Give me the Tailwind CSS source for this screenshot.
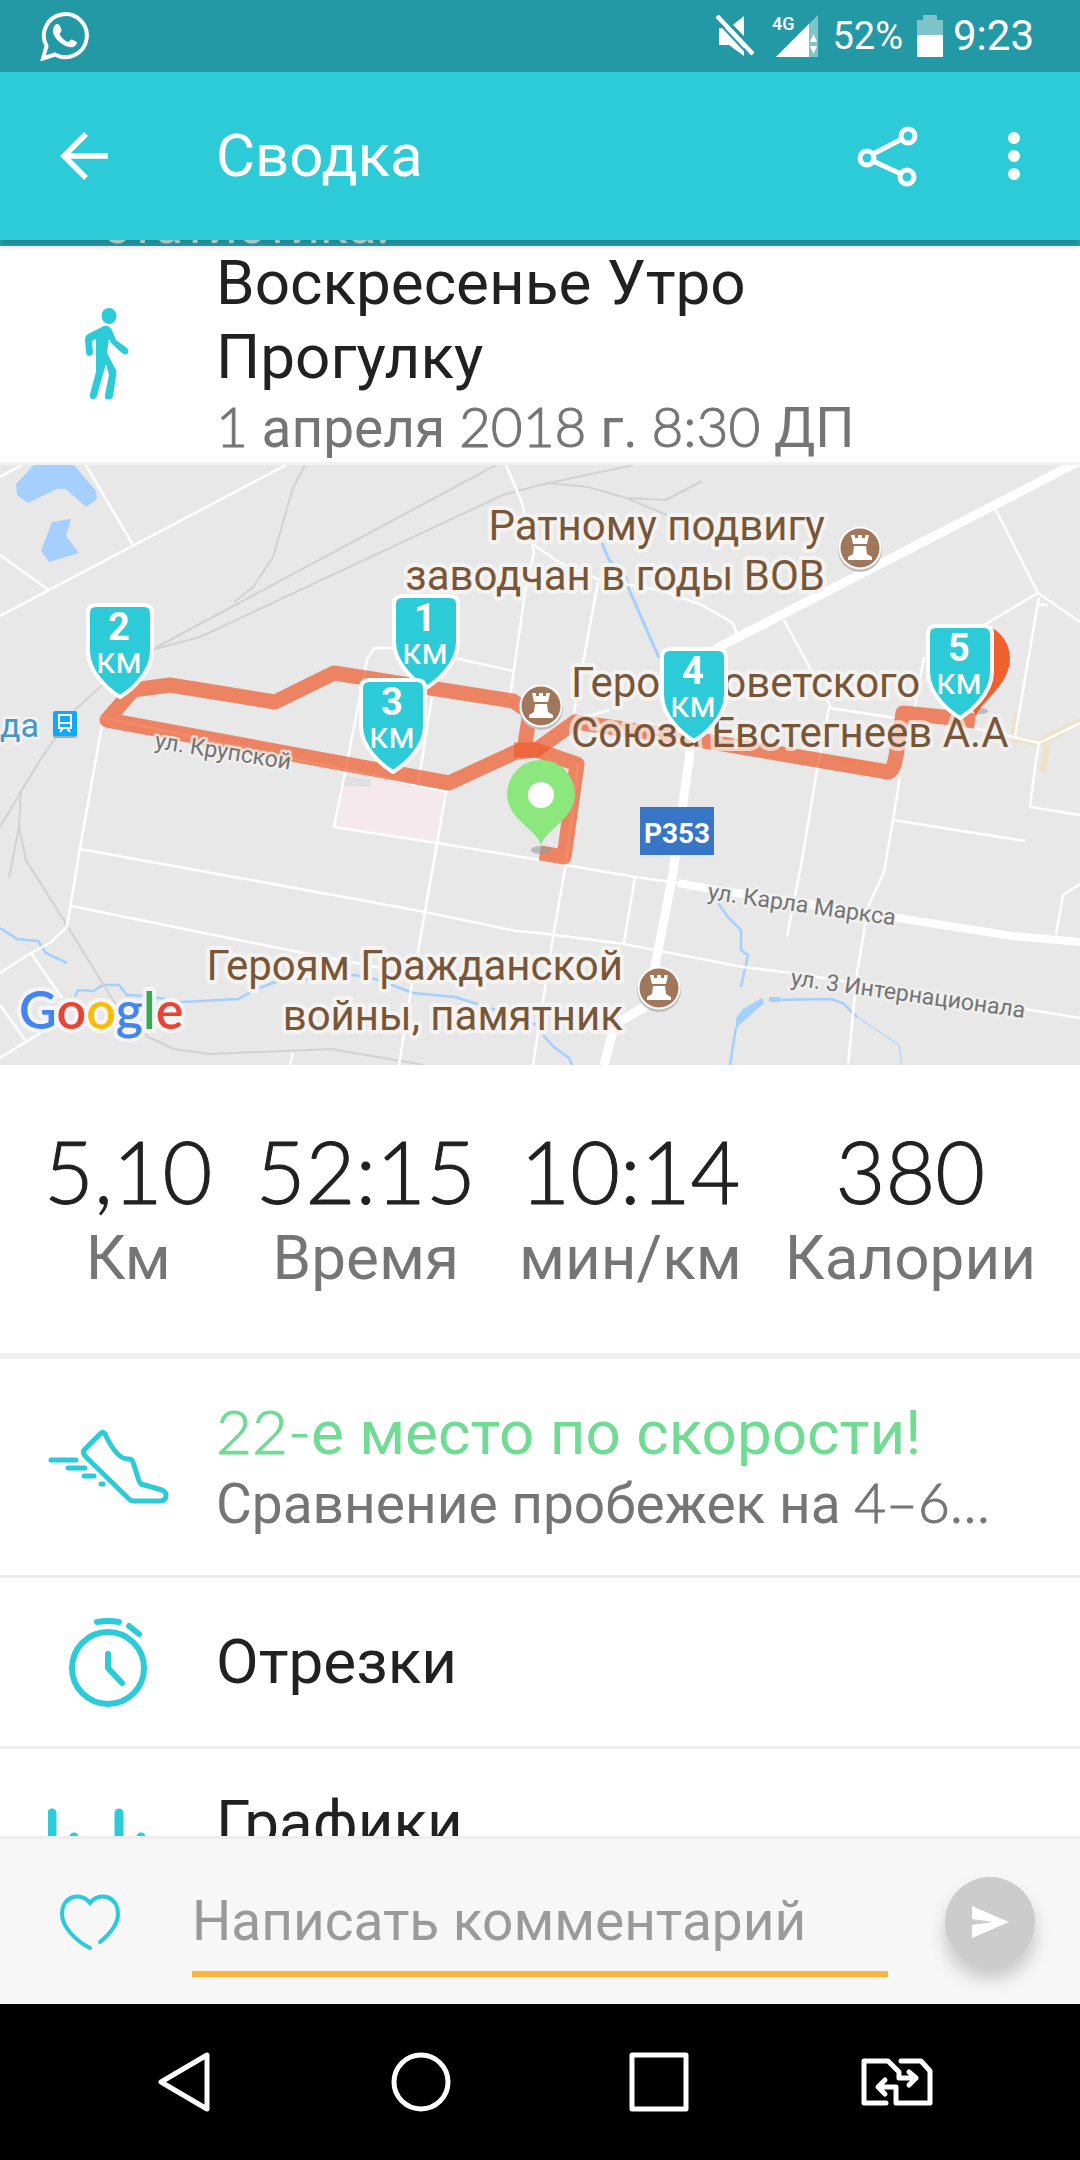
<!DOCTYPE html>
<html lang="ru">
<head>
    <meta charset="UTF-8">
    <meta name="viewport" content="width=device-width, initial-scale=1.0">
    <title>Сводка</title>
    <script src="https://cdn.jsdelivr.net/npm/@tailwindcss/browser@4"></script>
</head>
<body class="h-screen flex flex-col overflow-hidden bg-white font-[Roboto,sans-serif] text-[#212121]">

    <!-- Status bar -->
    <div class="h-[72px] shrink-0 bg-[#2499a6] text-white flex items-center justify-between pl-10 pr-[46px]">
        <svg class="size-[50px]" viewBox="0 0 50 50" fill="none" aria-label="WhatsApp">
            <path d="M3 47.500 L6.500 35 A21.500 21.500 0 1 1 15 43.500 Z" stroke="#fff" stroke-width="4"/>
            <path d="M15 14c2-2 4-1 5 1l1.500 4c.5 1.500-2 3-2 4 2 4 5 6.500 8.500 8 1.500 0 2-3 4-2.500l4 2c1.500 1 1 3-1 4.500-3 2-7 1.500-12-1.500-5-3-9-8-10-12-.5-3 .5-6 2-7.500z" fill="#fff"/>
        </svg>
        <div class="flex items-center">
            <svg class="w-[40px] h-[42px] mr-[16px]" viewBox="0 0 40 42" fill="#fff" aria-label="Без звука">
                <path d="M3 13H13L28 1V41L13 30H3z"/>
                <path d="M3 -1L41 38" stroke="#2499a6" stroke-width="5"/>
                <path d="M1 1L37 39" stroke="#fff" stroke-width="4.500"/>
                <path d="M0 5L30 37" stroke="#2499a6" stroke-width="2"/>
            </svg>
            <svg class="w-[46px] h-[44px] mr-[14px]" viewBox="0 0 46 44" aria-label="Сигнал 4G">
                <path d="M4 43L46 1V43z" fill="#7fc4cb"/>
                <path d="M4 43L37 10V43z" fill="#fff"/>
                <path d="M38 28l3.500-8 3.500 8zM38 32h7l-3.500 8z" fill="#fff"/>
                <text x="0" y="16" font-size="18" font-weight="500" fill="#fff">4G</text>
            </svg>
            <span class="text-[38px] leading-[44px] mr-[14px]">52%</span>
            <svg class="w-[26px] h-[42px] mr-[10px]" viewBox="0 0 26 42" aria-label="Батарея">
                <path d="M6 0h14v5h6v16H0V5h6z" fill="#7fc4cb"/>
                <path d="M0 20h26v22H0z" fill="#fff"/>
            </svg>
            <span class="text-[42px] leading-[48px]">9:23</span>
        </div>
    </div>

    <!-- App bar -->
    <header class="h-[168px] shrink-0 relative z-10 bg-[#2dcad7] text-white flex items-center shadow-[0_6px_6px_rgba(0,0,0,0.2)]">
        <button type="button" aria-label="Назад" class="w-[216px] h-full pl-[60px]">
            <svg class="size-[48px]" viewBox="0 0 48 48" fill="none" stroke="#fff" stroke-width="5.500">
                <path d="M48 24H5M26 2L4 24l22 22"/>
            </svg>
        </button>
        <h1 class="flex-1 text-[60px] leading-[74px]">Сводка</h1>
        <button type="button" aria-label="Поделиться" class="w-[84px] h-full flex items-center justify-center">
            <svg class="size-[64px]" viewBox="0 0 64 64" fill="none" stroke="#fff" stroke-width="5">
                <circle cx="11" cy="34" r="7"/><circle cx="52" cy="12" r="7"/><circle cx="51" cy="53" r="7"/>
                <path d="M17 30l29-15M17 37l28 13"/>
            </svg>
        </button>
        <button type="button" aria-label="Ещё" class="w-[84px] h-full ml-[42px] mr-6 flex items-center justify-center">
            <svg class="w-[12px] h-[48px]" viewBox="0 0 12 48" fill="#fff">
                <circle cx="6" cy="6" r="6"/><circle cx="6" cy="24" r="6"/><circle cx="6" cy="42" r="6"/>
            </svg>
        </button>
    </header>

    <main class="flex-1 min-h-0 overflow-hidden">
        <!-- Banner, scrolled almost out of view -->
        <div class="h-[6px] overflow-hidden bg-[#2aa9b5] text-white/80 flex items-end pl-[103px]">
            <p class="text-[52px] leading-[40px]">статистика.</p>
        </div>

        <!-- Activity title -->
        <section class="flex items-center">
            <div class="w-[216px] shrink-0 flex justify-center">
                <svg class="w-[48px] h-[92px]" viewBox="0 0 48 92" fill="#2dcad7">
                    <ellipse cx="25" cy="8" rx="7.500" ry="8"/>
                    <path d="M18 19Q22 16 27 20L32 32 43 40Q46 44 43 46 40 47 38 45L28 36 25 31 23 45 32 62Q33 65 32 68L29 88Q28 92 24 91.500 20 91 21 87L25 67 22 56 19 66 13 88Q11 92 8 91 5 90 6 86L12 64V31L8 33 9 45Q8 48 5 48 2 47 2 44L1 31Q1 28 4 26z"/>
                </svg>
            </div>
            <div class="pr-12">
                <h2 class="text-[62px] leading-[74px]">Воскресенье Утро<br>Прогулку</h2>
                <p class="text-[55px] leading-[68px] text-[#757575]"><span class="font-[Lato] font-light leading-none [-webkit-text-stroke:1px]">1</span> апреля <span class="font-[Lato] font-light leading-none [-webkit-text-stroke:1px]">2018</span> г. <span class="font-[Lato] font-light leading-none [-webkit-text-stroke:1px]">8:30</span> ДП</p>
            </div>
        </section>

        <!-- Map -->
        <section class="border-t-[3px] border-[#f1f1f1] bg-[#e8e8e8]" aria-label="Карта маршрута">
            <svg class="block w-full h-[600px]" viewBox="0 0 1080 600" preserveAspectRatio="xMidYMid slice">
                <defs>
                    <path id="pin" d="M-24 2H24Q32 2 32 10V48C32 70 10 88 0 94C-10 88 -32 70 -32 48V10Q-32 2 -24 2Z" fill="#2dcad7" stroke="#fff" stroke-width="4" stroke-linejoin="round"/>
                    <g id="monument">
                        <circle cy="2" r="22" fill="#bdbdbd"/>
                        <circle r="21.500" fill="#fff"/>
                        <circle r="19.500" fill="#a0775a"/>
                        <path d="M-9-13h4v3h3v-3h4v3h3v-3h4l-2 9h-14zM-6-2H6l1 8 5 3v3h-24v-3l5-3z" fill="#fff"/>
                    </g>
                </defs>

                <!-- water -->
                <g fill="#a5cfff">
                    <path d="M34 0L16 19 17 30 28 38 57 24H66L86 42 97 34 96 26 74 0z"/>
                    <path d="M52 57L71 54 66 71 79 88 49 97 41 86z"/>
                    <path d="M762 533L743 544 736 553V563L764 538zM769 532h11v5h-11z"/>
                </g>
                <g fill="none" stroke="#a5cfff" stroke-width="2.500">
                    <path d="M602 78L609 95 626 112 628 122 659 193" stroke-width="3"/>
                    <path d="M718 438L728 452 741 465V485L748 490 741 522M736 562L730 600M769 535L831 534 843 538 857 552"/>
                    <path d="M857 552L899 580 902 600" stroke-width="1"/>
                    <path d="M543 570L554 582 569 593 572 600M0 463L17 474 38 476 46 488 67 498"/>
                    <path d="M75 532L78 525 93 526 103 520H119L127 530 148 531 182 537 238 534 255 525 275 517 355 510 379 515 413 528 455 532 496 545 537 560"/>
                </g>

                <!-- areas -->
                <path d="M344 310L444 327 437 377 335 362z" fill="#f6e9ee"/>
                <path d="M345 311L371 315V322L343 321z" fill="#e0e0e0"/>
                <g fill="none" stroke="#eee2cb" stroke-width="7">
                    <path d="M1008 273L1039 278 1080 256M1017 248L1014 272M1047 278L1043 307M838 295L890 301"/>
                </g>

                <!-- railways -->
                <g fill="none" stroke="#d2d2d2" stroke-width="2">
                    <path d="M305 0L293 23 273 92 253 122 234 137M496 0L155 183M633 0L540 20 503 30 200 172 155 184 100 222 75 245 40 295 22 325 0 362"/>
                    <path d="M547 18L588 22 626 33 666 35 702 16M626 33L667 50M21 325L19 362 9 413M19 362L26 395 68 462 114 537 148 572 174 584 210 589 331 584 424 600"/>
                </g>

                <!-- roads -->
                <g fill="none" stroke="#fff" stroke-width="2.500">
                    <path d="M86 0L133 80M286 0L0 151M0 90L50 126M0 12L22 0"/>
                    <path d="M102 260L80 383 67 462 50 478 31 488 0 508M31 488L62 533M0 540L25 575M0 593L45 565"/>
                    <path d="M80 384L344 432 425 447 516 466 540 468 624 479 743 502 791 508 1025 544 1080 553M71 441L303 488 382 503"/>
                    <path d="M432 232L418 320M446 327L425 447 411 525 399 600M395 183H374L367 195 345 308 334 362 437 378 540 395 566 400 635 412 678 418M101 252L448 327"/>
                    <path d="M450 192L513 206M506 0L522 38 534 87 525 128 510 232M534 80L560 98 600 115 660 125 702 140 733 158 738 172M598 117L583 198 574 248M574 255L610 245"/>
                    <path d="M996 45L1038 128 984 160M1038 128L1080 157M1039 132L1015 272M1039 140H1048M784 155L826 233 831 243 895 253M829 243L817 305 802 395 787 472M924 192L915 242"/>
                    <path d="M974 263L1039 278 1080 258M1039 278L1036 295 1030 342 1080 350M900 312L893 355 884 407 868 442 857 508 848 600M893 355L1025 376"/>
                    <path d="M1080 419L1063 430 1056 470M635 412L624 478M578 300L566 398 552 478 533 600M293 588L290 600"/>
                    <path d="M678 418L705 423 898 453 1012 471 1080 477" stroke-width="8"/>
                    <path d="M1080-4L719 182 697 200 689 295 673 408 655 502 657 530 643 543 622 555 614 562 604 600" stroke-width="9" stroke-linejoin="round"/>
                </g>

                <!-- route -->
                <g fill="none" stroke="#ee5a2c" stroke-opacity="0.7" stroke-width="15" stroke-linejoin="round">
                    <path d="M975 256L953 253 903 248 897 285Q894 307 888 307L693 274 575 257 536 285 516 287 449 318 107 255 133 225 170 220 275 237 334 208 513 236 530 247 523 292"/>
                    <path d="M514 285H536L577 299 564 392 540 388"/>
                </g>

                <!-- place names -->
                <g font-size="42" fill="#785738" stroke="#f5f3f1" stroke-width="8" stroke-linejoin="round" paint-order="stroke">
                    <text x="825" y="75" text-anchor="end">Ратному подвигу</text>
                    <text x="825" y="125" text-anchor="end">заводчан в годы ВОВ</text>
                    <text x="571" y="232">Герой Советского</text>
                    <text x="571" y="282" stroke-opacity="0.7">Союза Евстегнеев А.А</text>
                    <text x="623" y="515" text-anchor="end">Героям Гражданской</text>
                    <text x="623" y="565" text-anchor="end">войны, памятник</text>
                </g>
                <g font-size="23" fill="#737373" stroke="#f0f0f0" stroke-width="5" stroke-linejoin="round" stroke-opacity="0.8" paint-order="stroke">
                    <text transform="translate(154 283) rotate(9)">ул. Крупской</text>
                    <text transform="translate(707 434) rotate(8)">ул. Карла Маркса</text>
                    <text transform="translate(790 520) rotate(8)">ул. 3 Интернационала</text>
                </g>
                <text x="0" y="272" font-size="34" fill="#4597c9" stroke="#f3f3f3" stroke-width="5" paint-order="stroke">да</text>

                <!-- station -->
                <rect x="53" y="248" width="24" height="25" rx="2" fill="#8fb3c4"/>
                <rect x="53" y="246" width="24" height="25" rx="2" fill="#10a9fa"/>
                <path d="M59 250h12v13H59zM59 258h12M60 267l3-4M70 267l-3-4" fill="none" stroke="#fff" stroke-width="2"/>

                <!-- road number -->
                <rect x="640" y="342" width="74" height="48" fill="#3776c6"/>
                <text x="677" y="378" font-size="28" font-weight="700" fill="#fff" text-anchor="middle">Р353</text>

                <use href="#monument" x="860" y="83"/>
                <use href="#monument" x="541" y="241"/>
                <use href="#monument" x="659" y="523"/>

                <!-- finish and start -->
                <ellipse cx="981" cy="246" rx="7" ry="3" fill="#bbb"/>
                <path d="M976 251C970 235 942 220 942 193a34 34 0 0 1 68 0C1010 220 982 235 976 251z" fill="#f0602f"/>
                <ellipse cx="541" cy="385" rx="10" ry="4" fill="#999" fill-opacity="0.6"/>
                <path d="M541 380C536 364 507 354 507 329a34 34 0 0 1 68 0C575 354 546 364 541 380z" fill="#8ce77d"/>
                <circle cx="541" cy="330" r="13" fill="#fff"/>

                <!-- kilometre marks -->
                <use href="#pin" x="426" y="129"/>
                <use href="#pin" x="120" y="138"/>
                <use href="#pin" x="393" y="213"/>
                <use href="#pin" x="694" y="182"/>
                <use href="#pin" x="960" y="159"/>
                <g fill="#fff" text-anchor="middle" font-size="38" font-weight="700">
                    <text x="425" y="166">1</text>
                    <text x="119" y="175">2</text>
                    <text x="392" y="250">3</text>
                    <text x="693" y="219">4</text>
                    <text x="959" y="196">5</text>
                </g>
                <g fill="#fff" text-anchor="middle" font-size="36">
                    <text x="425" y="199">км</text>
                    <text x="119" y="208">км</text>
                    <text x="392" y="283">км</text>
                    <text x="693" y="252">км</text>
                    <text x="959" y="229">км</text>
                </g>

                <!-- map attribution -->
                <text x="19" y="564" class="font-[Lato]" font-size="52" font-weight="600" stroke="#f5f5f5" stroke-width="8" stroke-linejoin="round" paint-order="stroke"><tspan fill="#4285f4">G</tspan><tspan fill="#ea4335">o</tspan><tspan fill="#fbbc05">o</tspan><tspan fill="#4285f4">g</tspan><tspan fill="#34a853">l</tspan><tspan fill="#ea4335">e</tspan></text>
            </svg>
        </section>

        <!-- Totals -->
        <dl class="flex justify-between px-[44px] pt-14 pb-[58px] border-b-[6px] border-[#eeeeee] text-center">
            <div class="flex flex-col-reverse">
                <dt class="text-[62px] leading-[74px] text-[#757575]">Км</dt>
                <dd class="font-[Lato] font-light text-[86px] leading-[100px] [-webkit-text-stroke:1px]">5,10</dd>
            </div>
            <div class="flex flex-col-reverse">
                <dt class="text-[62px] leading-[74px] text-[#757575]">Время</dt>
                <dd class="font-[Lato] font-light text-[86px] leading-[100px] [-webkit-text-stroke:1px]">52:15</dd>
            </div>
            <div class="flex flex-col-reverse">
                <dt class="text-[62px] leading-[74px] text-[#757575]">мин/км</dt>
                <dd class="font-[Lato] font-light text-[86px] leading-[100px] [-webkit-text-stroke:1px]">10:14</dd>
            </div>
            <div class="flex flex-col-reverse">
                <dt class="text-[62px] leading-[74px] text-[#757575]">Калории</dt>
                <dd class="font-[Lato] font-light text-[86px] leading-[100px] [-webkit-text-stroke:1px]">380</dd>
            </div>
        </dl>

        <!-- Details -->
        <a href="#speed" class="flex items-center h-[219px] border-b-[3px] border-[#eeeeee]">
            <span class="w-[216px] shrink-0 flex justify-center">
                <svg class="w-[124px] h-[76px]" viewBox="0 0 124 76" fill="none" stroke="#2dcad7" stroke-width="5" stroke-linecap="round" stroke-linejoin="round">
                    <path d="M55 4L39 20Q36 23 39 27L83 70Q85 72 88 72H114Q120 72 120 66 120 63 116 61L95 55Q94 54 93 52L87 33Q86 30 83 30 72 31 61 9L59 5Q57 2 55 4z"/>
                    <path d="M5 31H30M22 39H39M38 47H48M55 55H57"/>
                </svg>
            </span>
            <span class="block min-w-0 flex-1 pr-10">
                <span class="block text-[62px] leading-[74px] text-[#6fdb93]"><span class="font-[Lato] font-light leading-none [-webkit-text-stroke:1px]">22-</span>е место по скорости!</span>
                <span class="block text-[55px] leading-[68px] text-[#757575] whitespace-nowrap">Сравнение пробежек на <span class="font-[Lato] font-light leading-none [-webkit-text-stroke:1px]">4–6…</span></span>
            </span>
        </a>
        <a href="#splits" class="flex items-center h-[171px] border-b-[3px] border-[#eeeeee]">
            <span class="w-[216px] shrink-0 flex justify-center">
                <svg class="w-[80px] h-[96px]" viewBox="0 0 80 96" fill="none" stroke="#2dcad7" stroke-width="6" stroke-linecap="round" stroke-linejoin="round">
                    <circle cx="40" cy="54" r="36"/>
                    <path d="M29 8Q40 6 51 8M61 12L71 20M40 40V54L54 69"/>
                </svg>
            </span>
            <span class="text-[62px] leading-[74px]">Отрезки</span>
        </a>
        <a href="#charts" class="flex items-center h-[148px]">
            <span class="w-[216px] shrink-0 flex justify-center">
                <svg class="w-[120px] h-[72px]" viewBox="0 0 120 72" fill="none" stroke="#2dcad7" stroke-width="9" stroke-linecap="round">
                    <path d="M4 26V68M71 26V68M26 50V68M93 50V68"/>
                </svg>
            </span>
            <span class="text-[62px] leading-[74px]">Графики</span>
        </a>
    </main>

    <!-- Comment box -->
    <form class="h-[168px] shrink-0 flex items-center border-t-[3px] border-[#eeeeee] bg-[#f7f7f7]">
        <button type="button" aria-label="Нравится" class="w-[192px] h-full pl-[58px]">
            <svg class="w-[64px] h-[60px]" viewBox="0 0 64 60" fill="none" stroke="#2dcad7" stroke-width="4" stroke-linecap="round">
                <path d="M42 50C54 40 60 31 60 22 60 4 41-1 32 11 23-1 4 4 4 22 4 35 18 49 32 56"/>
            </svg>
        </button>
        <input type="text" aria-label="Комментарий" placeholder="Написать комментарий" class="flex-1 min-w-0 h-[106px] mt-1 border-b-[6px] border-[#fcb53b] bg-transparent outline-none text-[55px] placeholder-[#9a9a9a]">
        <button type="submit" aria-label="Отправить" class="size-[90px] ml-[57px] mr-[45px] rounded-full bg-[#cccccc] flex items-center justify-center shadow-[0_12px_18px_rgba(0,0,0,0.2)]">
            <svg class="w-[38px] h-[32px]" viewBox="0 0 38 32" fill="#fff">
                <path d="M1 0L38 16 1 32V19L22 16 1 13z"/>
            </svg>
        </button>
    </form>

    <!-- System navigation -->
    <nav class="h-[156px] shrink-0 grid grid-cols-4 px-16 bg-black">
        <button type="button" aria-label="Назад" class="flex items-center justify-center">
            <svg class="size-[64px]" viewBox="0 0 64 64" fill="none" stroke="#fff" stroke-width="5" stroke-linejoin="round"><path d="M10 32L56 5V59z"/></svg>
        </button>
        <button type="button" aria-label="Домой" class="flex items-center justify-center">
            <svg class="size-[64px]" viewBox="0 0 64 64" fill="none" stroke="#fff" stroke-width="5"><circle cx="32" cy="32" r="27"/></svg>
        </button>
        <button type="button" aria-label="Недавние" class="flex items-center justify-center">
            <svg class="size-[64px]" viewBox="0 0 64 64" fill="none" stroke="#fff" stroke-width="5" stroke-linejoin="round"><path d="M5 5H59V59H5z"/></svg>
        </button>
        <button type="button" aria-label="Сменить SIM" class="flex items-center justify-center">
            <svg class="w-[72px] h-[48px]" viewBox="0 0 72 48" fill="none" stroke="#fff" stroke-width="5" stroke-linecap="round" stroke-linejoin="round">
                <path d="M25 45H3V3H27L38 14V20H55M48 14L55 20 48 27M40 3H60L69 13V45H35V29H18M24 22L17 29 24 36"/>
            </svg>
        </button>
    </nav>

</body>
</html>
